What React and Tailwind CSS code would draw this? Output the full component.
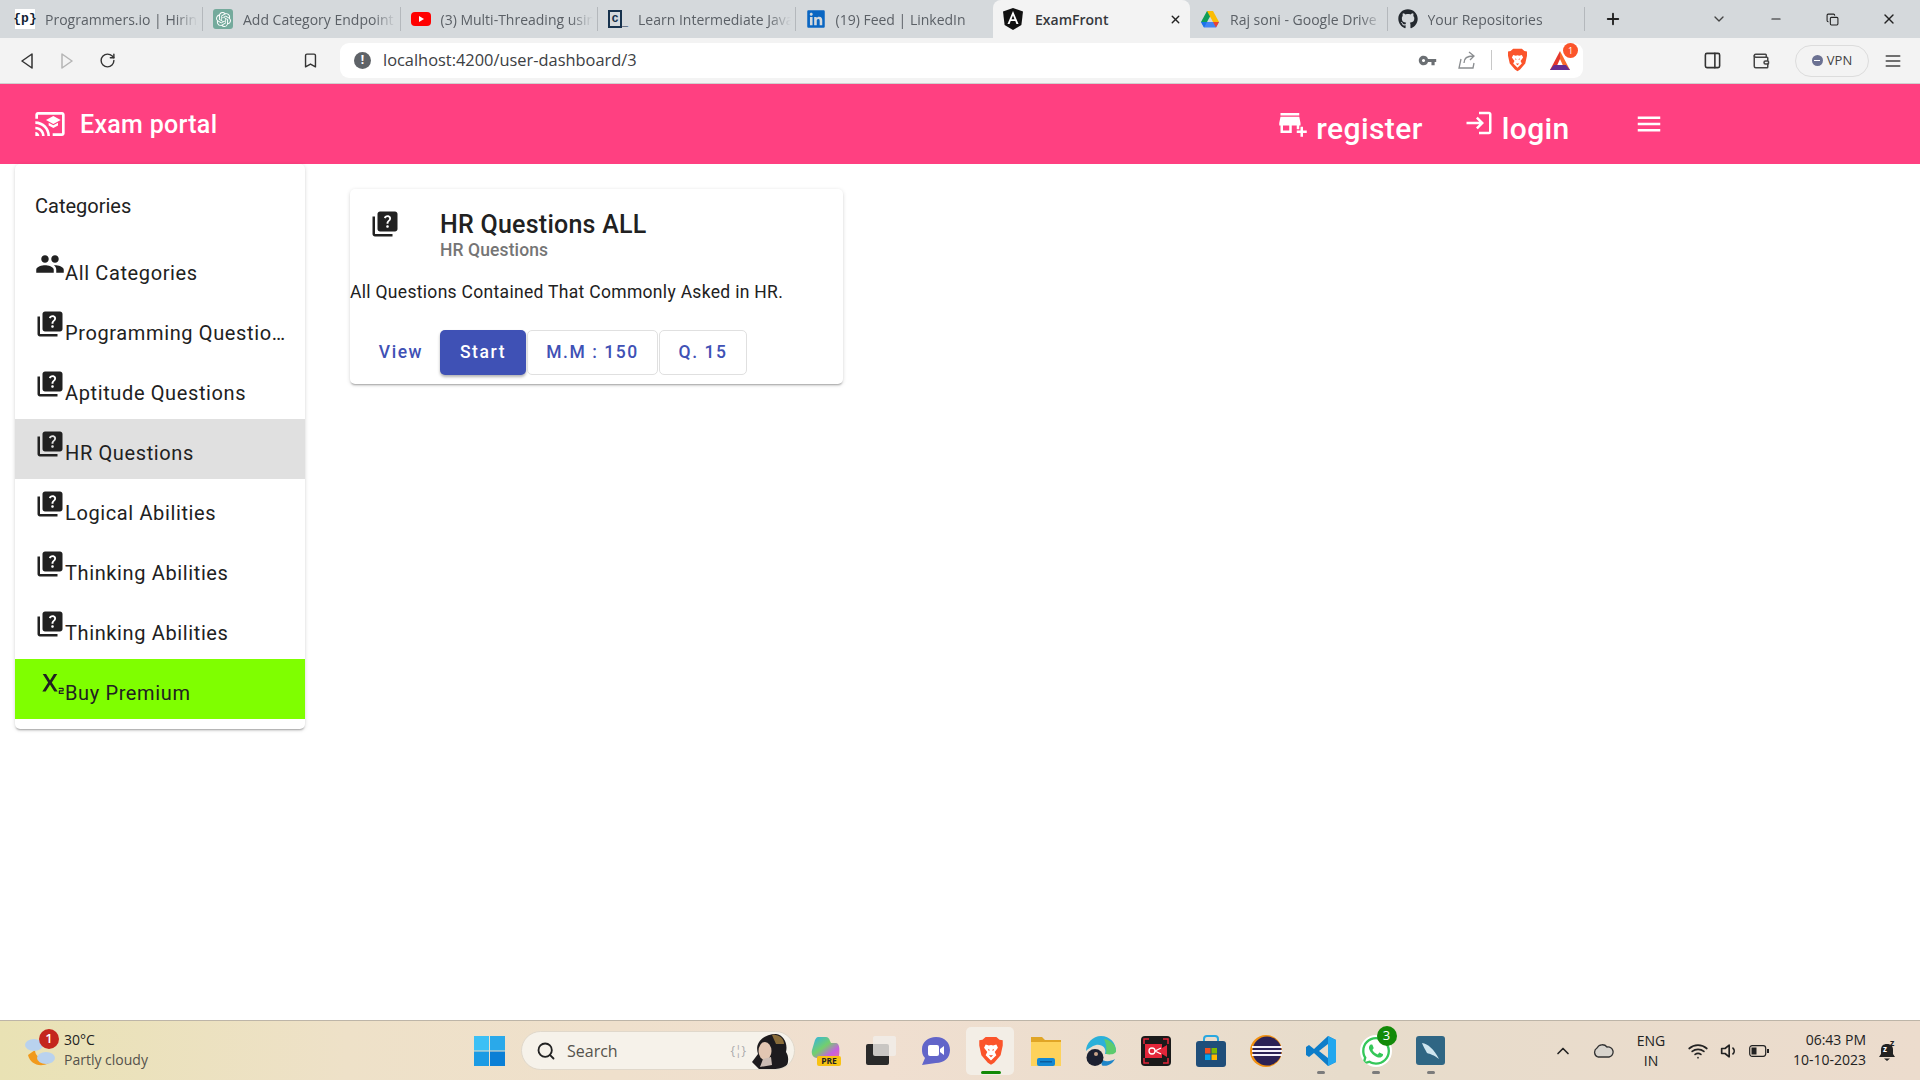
import { MdQuiz, MdPeople, MdCastForEducation, MdAddBusiness, MdLogin, MdMenu, MdSubscript, MdVpnKey } from 'react-icons/md'
import { FaGithub, FaWhatsapp, FaLinkedin } from 'react-icons/fa'
import { SiOpenai } from 'react-icons/si'
import { FiSearch, FiChevronUp, FiWifi, FiVolume1 } from 'react-icons/fi'
import { LuRotateCw, LuBookmark, LuMinus, LuPlus, LuChevronDown, LuX, LuPanelRight, LuWallet, LuMenu, LuCopy } from 'react-icons/lu'

const CATEGORIAS = [
  'Programming Questions',
  'Aptitude Questions',
  'HR Questions',
  'Logical Abilities',
  'Thinking Abilities',
  'Thinking Abilities',
]

function BraveLogo({ size = 22 }) {
  return (
    <svg width={size} height={size * 1.15} viewBox="0 0 24 28">
      <path d="M7 1 L17 1 L20 3.5 L23 4 L23 9 L21 18 L15 25 L12 27 L9 25 L3 18 L1 9 L1 4 L4 3.5 Z" fill="#fb542b" />
      <path d="M7 8 L10 9 L12 8.5 L14 9 L17 8 L18.5 11 L15.5 15 L17 18 L12 23 L7 18 L8.5 15 L5.5 11 Z" fill="#fff" />
      <path d="M9 12 L11 13 L10 14 Z M15 12 L13 13 L14 14 Z M10 18 L14 18 L12 20 Z" fill="#fb542b" />
    </svg>
  )
}

function Favicon({ tipo }) {
  if (tipo === 'p') {
    return <span className="w-5 h-5 bg-white flex items-center justify-center text-[13px] font-bold text-[#123] font-['Liberation_Mono',monospace]">{'{p}'}</span>
  }
  if (tipo === 'gpt') {
    return <span className="w-5 h-5 rounded-[3px] bg-[#74aa9c] flex items-center justify-center text-white"><SiOpenai size={15} /></span>
  }
  if (tipo === 'yt') {
    return (
      <svg width="20" height="20" viewBox="0 0 20 20">
        <rect y="3" width="20" height="14" rx="4" fill="#f00" />
        <path d="M8 7 L13 10 L8 13 Z" fill="#fff" />
      </svg>
    )
  }
  if (tipo === 'c') {
    return <span className="w-5 h-5 flex items-center text-[14px] leading-none font-bold text-[#17324d] font-['Liberation_Mono',monospace]"><span className="border-2 border-[#17324d] w-[14px] h-[18px] flex items-center justify-center text-[12px]">c</span><span className="self-end text-[10px]">_</span></span>
  }
  if (tipo === 'in') {
    return <FaLinkedin size={20} className="text-[#0a66c2]" />
  }
  if (tipo === 'ng') {
    return (
      <svg width="20" height="22" viewBox="0 0 20 22">
        <path d="M10 0 L20 3.5 L18.4 17 L10 22 L1.6 17 L0 3.5 Z" fill="#111" />
        <path d="M10 3 L4.5 16 L6.6 16 L7.7 13 L12.3 13 L13.4 16 L15.5 16 Z M8.5 11.2 L10 7.5 L11.5 11.2 Z" fill="#fff" fillRule="evenodd" />
      </svg>
    )
  }
  if (tipo === 'drive') {
    return (
      <svg width="20" height="20" viewBox="0 0 20 20">
        <path d="M7 1 L13 1 L7 12 L1 12 Z" fill="#0f9d58" transform="translate(0 1)" />
        <path d="M7 1 L13 1 L19 12 L13 12 Z" fill="#fbbc04" transform="translate(0 1)" />
        <path d="M1 13 L19 13 L16 18.5 L4 18.5 Z" fill="#4285f4" />
        <path d="M1 13 L7 13 L4 18.5 Z" fill="#1a73e8" />
        <path d="M13 13 L19 13 L16 18.5 Z" fill="#ea4335" />
      </svg>
    )
  }
  return <FaGithub size={20} className="text-[#24292f]" />
}

function Tab({ tipo, titulo, ancho = 'w-[197.5px] pl-[10px]', sinBorde }) {
  return (
    <div className={`${ancho} h-[24px] mt-[7px] pr-[4px] flex items-center gap-[10px] shrink-0 ${sinBorde ? '' : 'border-r border-[#b4b8bc]'}`}>
      <Favicon tipo={tipo} />
      <span className="flex-1 overflow-hidden whitespace-nowrap text-[14px] text-[#5b6066] [mask-image:linear-gradient(90deg,#000_85%,transparent)]">{titulo}</span>
    </div>
  )
}

function BarraNavegador() {
  return (
    <div className="font-['Open_Sans',sans-serif]">
      <div className="h-[38px] bg-[#d5d9dc] flex items-start">
        <Tab tipo="p" titulo="Programmers.io | Hiring" ancho="w-[203px] pl-[15px]" />
        <Tab tipo="gpt" titulo="Add Category Endpoint" />
        <Tab tipo="yt" titulo="(3) Multi-Threading using" />
        <Tab tipo="c" titulo="Learn Intermediate Java" />
        <Tab tipo="in" titulo="(19) Feed | LinkedIn" sinBorde />
        <div className="w-[197px] h-[38px] bg-[#f3f3f3] rounded-t-[8px] flex items-center pl-[10px] pr-[8px] gap-[12px] shrink-0">
          <Favicon tipo="ng" />
          <span className="flex-1 text-[14px] text-[#35383c] font-semibold">ExamFront</span>
          <LuX size={13} className="text-[#222]" strokeWidth={2.5} />
        </div>
        <Tab tipo="drive" titulo="Raj soni - Google Drive" />
        <Tab tipo="gh" titulo="Your Repositories" />
        <LuPlus size={18} className="text-[#222] mt-[10px] ml-[19px]" strokeWidth={2.5} />
        <LuChevronDown size={16} className="text-[#444] mt-[11px] ml-[89px]" />
        <LuMinus size={14} className="text-[#222] mt-[12px] ml-[42px]" />
        <LuCopy size={13} className="text-[#222] mt-[13px] ml-[43px]" />
        <LuX size={16} className="text-[#222] mt-[11px] ml-[42px]" />
      </div>

      <div className="h-[46px] bg-[#f3f3f3] border-b border-[#d0d0d0] flex items-center">
        <svg width="12" height="16" viewBox="0 0 12 16" className="ml-[21px]"><path d="M11 1 L1 8 L11 15 Z" fill="none" stroke="#333" strokeWidth="1.5" strokeLinejoin="round" /></svg>
        <svg width="12" height="16" viewBox="0 0 12 16" className="ml-[28px]"><path d="M1 1 L11 8 L1 15 Z" fill="none" stroke="#b5b5b5" strokeWidth="1.5" strokeLinejoin="round" /></svg>
        <LuRotateCw size={17} className="text-[#333] ml-[26px]" />
        <LuBookmark size={17} className="text-[#333] ml-[186px]" />
        <div className="ml-[21px] w-[1243px] h-[35px] mb-[1px] bg-white rounded-[9px] flex items-center pl-[14px] pr-[11px]">
          <span className="w-[17px] h-[17px] rounded-full bg-[#5f6368] text-white text-[12px] font-bold flex items-center justify-center">!</span>
          <span className="ml-[12px] mt-[1px] text-[16.4px] text-[#3c4043]">localhost:4200/user-dashboard/3</span>
          <MdVpnKey size={19} className="text-[#6b6f73] ml-auto" />
          <svg width="18" height="18" viewBox="0 0 18 18" className="ml-[21px]">
            <path d="M3 8 L1 17 L15 17 L16 12 M6 12 C6 7 9 5 15 5 M11 1 L16 5 L12 9" fill="none" stroke="#8a8d90" strokeWidth="1.3" />
          </svg>
          <span className="w-px h-[20px] bg-[#c8c8c8] ml-[15px]" />
          <span className="ml-[15px] flex"><BraveLogo size={21} /></span>
          <span className="relative ml-[20px] flex">
            <svg width="24" height="24" viewBox="0 0 24 24">
              <path d="M12 3 L2 22 L7 22 L12 11 Z" fill="#e5372b" />
              <path d="M12 3 L22 22 L17 22 L12 11 Z" fill="#fb6a2b" />
              <path d="M2 22 L22 22 L18 17 L6 17 Z" fill="#662d91" />
            </svg>
            <span className="absolute -top-[5px] -right-[6px] w-[15px] h-[15px] rounded-full bg-[#fb542b] text-white text-[9px] flex items-center justify-center">1</span>
          </span>
        </div>
        <LuPanelRight size={19} className="text-[#333] ml-[120px]" />
        <LuWallet size={18} className="text-[#444] ml-[30px]" />
        <div className="ml-[25px] w-[74px] h-[32px] rounded-full border border-[#dcdcdc] flex items-center justify-center gap-[4px] text-[13px] text-[#444]">
          <span className="w-[11px] h-[11px] rounded-full bg-[#6b7192] flex items-center justify-center"><span className="w-[6px] h-[1.5px] bg-white" /></span>
          VPN
        </div>
        <LuMenu size={20} className="text-[#444] ml-[14px]" />
      </div>
    </div>
  )
}

function Navbar() {
  return (
    <div className="h-[80px] bg-[#ff4081] text-white flex items-center shrink-0 font-['Roboto',sans-serif]">
      <MdCastForEducation size={32} className="ml-[34px]" />
      <span className="ml-[14px] text-[25px] font-medium tracking-[0.3px] mt-[1px]">Exam portal</span>
      <MdAddBusiness size={30} className="ml-[1061px] mb-[2px]" />
      <span className="ml-[8px] text-[30px] font-medium tracking-[0.4px] mt-[9px]">register</span>
      <MdLogin size={30} className="ml-[41px] mb-[2px]" />
      <span className="ml-[8px] text-[30px] font-medium tracking-[0.4px] mt-[9px]">login</span>
      <MdMenu size={30} className="ml-[64px] mb-[1px]" />
    </div>
  )
}

function ItemLista({ icono: Icono, activo, premium, children }) {
  return (
    <div className={`h-[60px] pl-[20px] pr-[16px] flex items-start text-[20px] tracking-[0.625px] text-[#212121] ${activo ? 'bg-[#e0e0e0]' : ''} ${premium ? 'bg-[#7fff00]' : ''}`}>
      <Icono size={30} className="shrink-0 mt-[10px] text-[#212121]" />
      <span className="mt-[22px] leading-[24px] truncate">{children}</span>
    </div>
  )
}

function Sidebar() {
  return (
    <div className="w-[290px] h-[565px] ml-[15px] bg-white rounded-[5px] shadow-[0_2px_2px_-1px_rgba(0,0,0,0.3),0_1px_4px_0_rgba(0,0,0,0.14)] shrink-0">
      <div className="h-[75px] pl-[20px] pt-[30px] text-[20px] leading-[24px] text-[#212121]">Categories</div>
      <ItemLista icono={MdPeople}>All Categories</ItemLista>
      {CATEGORIAS.map((c, i) => (
        <ItemLista key={i} icono={MdQuiz} activo={c === 'HR Questions'}>{c}</ItemLista>
      ))}
      <ItemLista icono={MdSubscript} premium>Buy Premium</ItemLista>
    </div>
  )
}

function TarjetaExamen() {
  return (
    <div className="w-[493px] h-[195px] ml-[45px] mt-[25px] bg-white rounded-[5px] shadow-[0_2px_2px_-1px_rgba(0,0,0,0.3),0_1px_4px_0_rgba(0,0,0,0.14)]">
      <div className="flex pl-[20px] pt-[20px]">
        <MdQuiz size={30} className="text-[#212121]" />
        <div className="ml-[40px] pt-[1px]">
          <div className="text-[25px] leading-[30px] font-medium tracking-[0.25px] text-[#212121]">HR Questions ALL</div>
          <div className="text-[17.5px] leading-[21px] font-medium tracking-[0.1px] text-[#757575]">HR Questions</div>
        </div>
      </div>
      <p className="mt-[19px] text-[17.5px] leading-[25px] tracking-[0.31px] text-[#212121]">All Questions Contained That Commonly Asked in HR.</p>
      <div className="flex items-center mt-[25px] text-[17.5px] font-medium tracking-[1.56px] text-[#3f51b5]">
        <button className="w-[90px] h-[45px] pl-[12px] rounded-[5px]">View</button>
        <button className="w-[86px] h-[45px] rounded-[5px] bg-[#3f51b5] text-white shadow-[0_2px_3px_rgba(0,0,0,0.3)]">Start</button>
        <button className="w-[131px] h-[45px] ml-[1px] rounded-[5px] border border-[#e0e0e0]">M.M : 150</button>
        <button className="w-[88px] h-[45px] ml-[1px] rounded-[5px] border border-[#e0e0e0]">Q. 15</button>
      </div>
    </div>
  )
}

function IconoBarra({ children, activo, punto }) {
  return (
    <div className="relative w-[55px] h-[48px] flex items-center justify-center">
      {activo && <span className="absolute left-[3px] w-[48px] top-0 h-[48px] rounded-[5px] bg-[#f3eee6]" />}
      <span className="relative flex">{children}</span>
      {activo && <span className="absolute bottom-[1px] left-[18px] w-[20px] h-[3px] rounded bg-[#138a07]" />}
      {punto && <span className="absolute bottom-[1px] left-[24px] w-[8px] h-[3px] rounded bg-[#7b7b7b]" />}
    </div>
  )
}

function BarraTareas() {
  return (
    <div className="h-[60px] shrink-0 flex items-center border-t border-[#bdb5a8] bg-[linear-gradient(90deg,#e9e2b4_0%,#eee1c8_18%,#f0dfd0_46%,#e7dccb_70%,#ecdccd_100%)] font-['Open_Sans',sans-serif] text-[#222]">
      {/* Clima */}
      <div className="relative w-[474px] h-full flex items-center shrink-0">
        <svg width="34" height="36" viewBox="0 0 34 36" className="ml-[24px]">
          <path d="M4 22 C6 31 16 35 25 30 L24 24 C18 27 11 24 11 17 Z" fill="#f19a1c" />
          <ellipse cx="10" cy="12" rx="9" ry="6" fill="#b9d2ee" />
          <ellipse cx="22" cy="25" rx="9" ry="6" fill="#b9d2ee" />
        </svg>
        <span className="absolute left-[39px] top-[8px] w-[20px] h-[20px] rounded-full bg-[#c4261d] text-white text-[13px] font-semibold flex items-center justify-center">1</span>
        <div className="ml-[6px] mb-[2px] text-[14px] leading-[20px]">
          <div>30°C</div>
          <div className="text-[#55524c]">Partly cloudy</div>
        </div>
      </div>
      <svg width="31" height="30" viewBox="0 0 31 30" className="shrink-0">
        <rect width="15" height="14.5" fill="#3cc0f5" />
        <rect x="16" width="15" height="14.5" fill="#2aa9ea" />
        <rect y="15.5" width="15" height="14.5" fill="#1b9be4" />
        <rect x="16" y="15.5" width="15" height="14.5" fill="#0a7fd6" />
      </svg>
      <div className="ml-[16px] w-[274px] h-[39px] rounded-full bg-[#f6f2ea] border border-[#e0d8cb] flex items-center pl-[14px] shrink-0 relative overflow-hidden">
        <FiSearch size={20} className="text-[#222]" strokeWidth={2.2} />
        <span className="ml-[11px] text-[16px] text-[#55524c]">Search</span>
        <span className="ml-auto mr-[48px] text-[12px] text-[#aaa]">{'{¦}'}</span>
        <svg width="46" height="38" viewBox="0 0 46 38" className="absolute right-[2px] top-0">
          <path d="M14 38 L6 30 L12 22 C8 10 18 2 30 2 C38 3 42 12 40 20 C44 26 42 34 38 38 Z" fill="#1d1b1e" />
          <path d="M26 3 C32 2 38 6 38 12 L30 12 Z" fill="#8a6d3a" />
          <ellipse cx="19" cy="19" rx="6.5" ry="9" fill="#e2c6b2" />
          <path d="M17 27 L25 25 L26 33 L14 35 Z" fill="#cbbcb4" />
        </svg>
      </div>
      <div className="ml-[3px] flex items-center shrink-0">
        <IconoBarra>
          <svg width="30" height="30" viewBox="0 0 30 30">
            <defs>
              <linearGradient id="copi" x1="0" y1="0" x2="1" y2="1">
                <stop offset="0" stopColor="#2fb3e8" /><stop offset="0.45" stopColor="#74cf6c" /><stop offset="0.75" stopColor="#c65fe0" /><stop offset="1" stopColor="#e66fa6" />
              </linearGradient>
            </defs>
            <path d="M7 1 L15 1 C17 1 18 2 19 5 L20 7 L25 7 C28 7 29 12 28 20 L24 22 L6 22 C2 22 0 18 1 14 L4 4 C5 2 6 1 7 1 Z" fill="url(#copi)" />
            <rect x="6" y="20" width="24" height="10" rx="2" fill="#f8c213" />
            <text x="18" y="28.3" fontSize="8.5" fontWeight="700" textAnchor="middle" fill="#222">PRE</text>
          </svg>
        </IconoBarra>
        <IconoBarra>
          <span className="relative w-[30px] h-[29px] block">
            <span className="absolute left-0 bottom-0 w-[23px] h-[21px] bg-[#2a2a2a] rounded-[2px]" />
            <span className="absolute right-0 top-0 w-[23px] h-[20px] bg-[#f1eeea]/80 rounded-[2px]" />
          </span>
        </IconoBarra>
        <IconoBarra>
          <svg width="30" height="30" viewBox="0 0 30 30">
            <path d="M15 1 C24 1 29 7 29 14 C29 22 23 27 15 27 L1 29 L4 22 C1 19 1 16 1 13 C1 6 7 1 15 1 Z" fill="#6265c9" />
            <rect x="7" y="9" width="11" height="11" rx="2" fill="#fff" />
            <path d="M19 13 L23 10 L23 19 L19 16 Z" fill="#fff" />
          </svg>
        </IconoBarra>
        <IconoBarra activo><BraveLogo size={26} /></IconoBarra>
        <IconoBarra>
          <svg width="30" height="30" viewBox="0 0 30 30">
            <path d="M0 1 L11 1 L14 4 L30 4 L30 28 L0 28 Z" fill="#e0a526" />
            <rect y="6" width="30" height="24" fill="#fdd25b" />
            <rect x="6" y="22" width="18" height="8" rx="2" fill="#1388d3" />
            <rect x="9" y="25" width="12" height="1.5" fill="#0b5c9e" />
          </svg>
        </IconoBarra>
        <IconoBarra>
          <svg width="30" height="30" viewBox="0 0 30 30">
            <path d="M15 0 C24 0 30 7 30 15 C30 17 24 18 19 18 C21 12 16 8 10 9 C6 10 2 13 0 15 C0 7 7 0 15 0 Z" fill="#2bb0d9" />
            <path d="M18 3 C25 4 30 9 30 15 C30 18 25 19 20 18 C21 12 20 7 18 3 Z" fill="#5ccb6d" />
            <path d="M16 29.5 C22 31 27 27 29 23 C24 26 17 26 14 22 Z" fill="#1f86c9" />
            <circle cx="9" cy="21.5" r="8.5" fill="#1c2030" />
            <circle cx="10" cy="18" r="2" fill="#c9a38a" />
          </svg>
        </IconoBarra>
        <IconoBarra>
          <svg width="30" height="30" viewBox="0 0 30 30">
            <rect width="30" height="30" rx="4" fill="#1a1a1a" />
            <path d="M3 8 V3 H8 M22 3 H27 V8 M3 22 V27 H8 M22 27 H27 V22" fill="none" stroke="#e3263a" strokeWidth="1.5" />
            <path d="M4 8 H21 V12 L26 9 V21 L21 18 V22 H4 Z" fill="#e3263a" />
            <circle cx="11" cy="15" r="3" fill="none" stroke="#fff" strokeWidth="1.3" />
            <path d="M14 15 L20 12 M14 15 L20 18" stroke="#fff" strokeWidth="1.3" />
          </svg>
        </IconoBarra>
        <IconoBarra>
          <svg width="30" height="32" viewBox="0 0 30 32">
            <path d="M8 8 V4 Q8 1 11 1 H19 Q22 1 22 4 V8" fill="none" stroke="#29a8e0" strokeWidth="2" />
            <rect y="6" width="30" height="26" rx="3" fill="#1f4e7a" />
            <rect x="9" y="13" width="5.5" height="5.5" fill="#f25022" />
            <rect x="15.5" y="13" width="5.5" height="5.5" fill="#7fba00" />
            <rect x="9" y="19.5" width="5.5" height="5.5" fill="#00a4ef" />
            <rect x="15.5" y="19.5" width="5.5" height="5.5" fill="#ffb900" />
          </svg>
        </IconoBarra>
        <IconoBarra>
          <svg width="32" height="32" viewBox="0 0 32 32">
            <circle cx="16" cy="16" r="16" fill="#f29111" />
            <circle cx="17" cy="16" r="14.5" fill="#2c2255" />
            <rect x="2" y="11" width="30" height="2" fill="#f5f2fa" />
            <rect x="2" y="15" width="30" height="2" fill="#f5f2fa" />
            <rect x="2" y="19" width="30" height="2" fill="#f5f2fa" />
          </svg>
        </IconoBarra>
        <IconoBarra punto>
          <svg width="30" height="30" viewBox="0 0 30 30">
            <path d="M22 0 L30 4 L30 26 L22 30 L8 17 L3 21 L0 19 L0 11 L3 9 L8 13 Z M22 8 L13 15 L22 22 Z" fill="#0d7dc9" fillRule="evenodd" />
            <path d="M22 0 L30 4 L30 26 L22 30 Z" fill="#23a7ee" />
          </svg>
        </IconoBarra>
        <IconoBarra punto>
          <FaWhatsapp size={32} className="text-[#35c759] bg-white rounded-full" />
          <span className="absolute -top-[9px] left-[17px] w-[20px] h-[20px] rounded-full bg-[#128a09] text-white text-[13px] flex items-center justify-center">3</span>
        </IconoBarra>
        <IconoBarra punto>
          <span className="w-[29px] h-[29px] rounded-[3px] bg-[#2f6684] flex items-center justify-center text-[#bfe0ee]">
            <svg width="22" height="22" viewBox="0 0 22 22"><path d="M2 3 C8 4 14 9 19 19 C14 15 10 14 7 13 C5 9 3 6 2 3 Z" fill="#cfe6f0" /></svg>
          </span>
        </IconoBarra>
      </div>
      {/* Bandeja */}
      <FiChevronUp size={20} className="ml-[95px] shrink-0" />
      <svg width="22" height="14" viewBox="0 0 22 14" className="ml-[19px] shrink-0"><path d="M6 13 A5 5 0 0 1 5 4 A6 6 0 0 1 15 3 A5 5 0 0 1 17 13 Z" fill="#d8d4cd" stroke="#333" strokeWidth="1.3" /></svg>
      <div className="ml-[22px] w-[30px] text-center text-[14px] leading-[20px] shrink-0">ENG<br />IN</div>
      <FiWifi size={20} className="ml-[22px] shrink-0" />
      <FiVolume1 size={20} className="ml-[12px] shrink-0" />
      <svg width="20" height="12" viewBox="0 0 20 12" className="ml-[9px] shrink-0"><rect x="0.7" y="0.7" width="16" height="10.6" rx="2.5" fill="none" stroke="#222" strokeWidth="1.2" /><rect x="2.5" y="2.5" width="5" height="7" fill="#222" /><rect x="18" y="4" width="2" height="4" fill="#222" /></svg>
      <div className="ml-[9px] mb-[2px] w-[88px] text-right text-[14px] leading-[20px] shrink-0">06:43 PM<br />10-10-2023</div>
      <span className="relative ml-[12px] flex shrink-0">
        <svg width="18" height="20" viewBox="0 0 18 20"><path d="M9 3 C13 3 15 5 15 9 L15 13 L17 16 L1 16 L3 13 L3 9 C3 5 5 3 9 3 Z M6 17.5 L12 17.5 L9 20 Z" fill="#222" /></svg>
        <span className="absolute left-[5px] top-[4px] text-[8px] leading-none font-bold text-white">z</span>
        <span className="absolute left-[12px] -top-[3px] text-[9px] leading-none font-bold text-[#222]">z</span>
      </span>
    </div>
  )
}

export default function App() {
  return (
    <div className="h-screen w-full flex flex-col overflow-hidden bg-white font-['Roboto',sans-serif]">
      <BarraNavegador />
      <Navbar />
      <div className="flex-1 flex items-start">
        <Sidebar />
        <TarjetaExamen />
      </div>
      <BarraTareas />
    </div>
  )
}
